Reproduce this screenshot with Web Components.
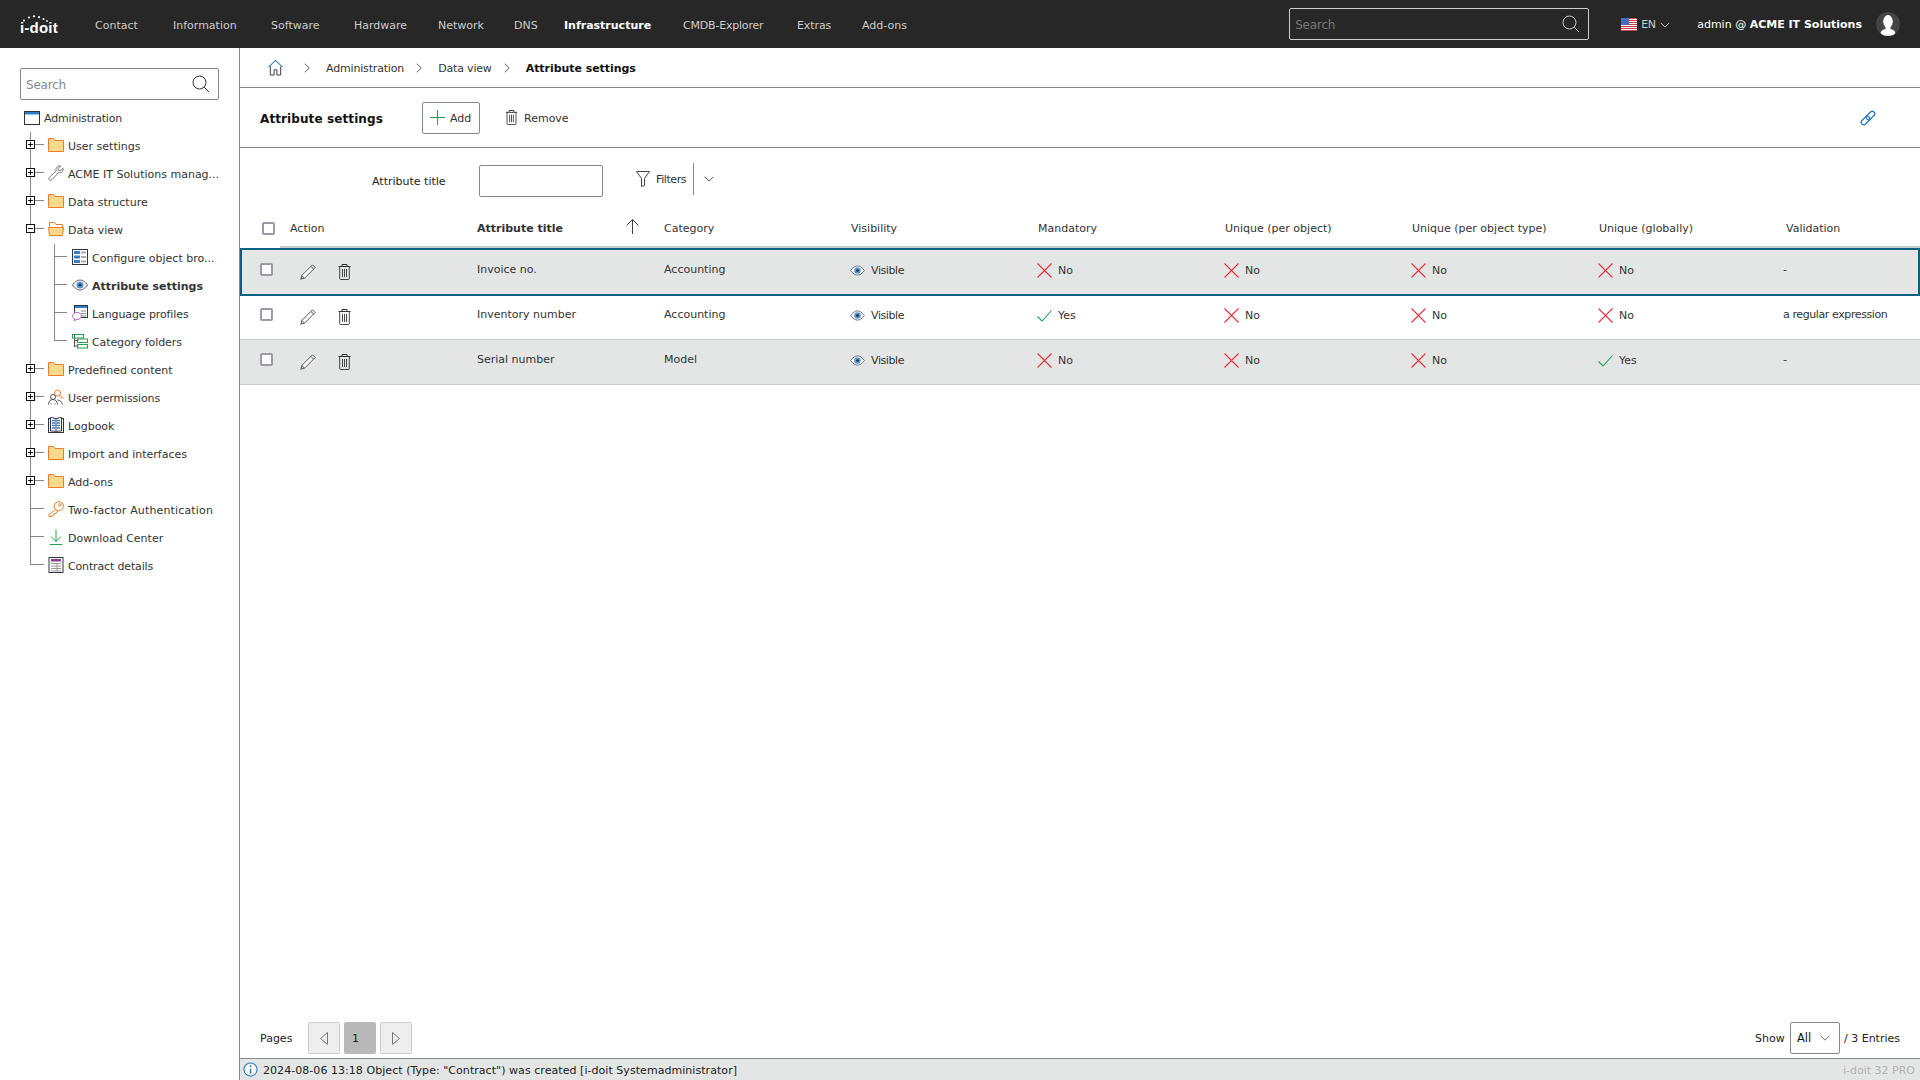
<!DOCTYPE html>
<html><head><meta charset="utf-8"><title>Attribute settings</title>
<style>
html,body{margin:0;padding:0;height:100%}
body{font:11px "DejaVu Sans",sans-serif;color:#333;background:#fff;overflow:hidden}
.ls1{letter-spacing:-.17px}.ls2{letter-spacing:-.4px}
attr-row[selected] cell-text{padding-bottom:4px}
</style></head><body>
<app-shell>
  <top-bar slot="top"></top-bar>
  <side-tree slot="side">
    <tree-row root icon="window" label="Administration" ls="-.17"></tree-row>
    <tree-row exp="plus" icon="folder" label="User settings"></tree-row>
    <tree-row exp="plus" icon="wrench" label="ACME IT Solutions manag..."></tree-row>
    <tree-row exp="plus" icon="folder" label="Data structure"></tree-row>
    <tree-row exp="minus" icon="folderopen" label="Data view"></tree-row>
    <tree-row child icon="browser" label="Configure object bro..."></tree-row>
    <tree-row child active icon="eye" label="Attribute settings"></tree-row>
    <tree-row child icon="lang" label="Language profiles" ls="-.1"></tree-row>
    <tree-row child lastchild icon="catfolder" label="Category folders" ls="-.1"></tree-row>
    <tree-row exp="plus" icon="folder" label="Predefined content"></tree-row>
    <tree-row exp="plus" icon="userkey" label="User permissions" ls="-.15"></tree-row>
    <tree-row exp="plus" icon="book" label="Logbook"></tree-row>
    <tree-row exp="plus" icon="folder" label="Import and interfaces"></tree-row>
    <tree-row exp="plus" icon="folder" label="Add-ons"></tree-row>
    <tree-row icon="key" label="Two-factor Authentication" ls=".15"></tree-row>
    <tree-row icon="download" label="Download Center"></tree-row>
    <tree-row last icon="contract" label="Contract details" ls="-.15"></tree-row>
  </side-tree>
  <bread-crumb slot="main">
    <span class="ls1">Administration</span><span class="ls1">Data view</span><span class="cur">Attribute settings</span>
  </bread-crumb>
  <title-bar slot="main"></title-bar>
  <filter-bar slot="main"></filter-bar>
  <attr-table slot="main">
    <attr-row selected alt><cell-text>Invoice no.</cell-text><cell-text>Accounting</cell-text><cell-flag kind="eye" class="ls2">Visible</cell-flag><cell-flag kind="no">No</cell-flag><cell-flag kind="no">No</cell-flag><cell-flag kind="no">No</cell-flag><cell-flag kind="no">No</cell-flag><cell-text class="v">-</cell-text></attr-row>
    <attr-row><cell-text>Inventory number</cell-text><cell-text>Accounting</cell-text><cell-flag kind="eye" class="ls2">Visible</cell-flag><cell-flag kind="yes">Yes</cell-flag><cell-flag kind="no">No</cell-flag><cell-flag kind="no">No</cell-flag><cell-flag kind="no">No</cell-flag><cell-text class="v ls2">a regular expression</cell-text></attr-row>
    <attr-row alt><cell-text>Serial number</cell-text><cell-text>Model</cell-text><cell-flag kind="eye" class="ls2">Visible</cell-flag><cell-flag kind="no">No</cell-flag><cell-flag kind="no">No</cell-flag><cell-flag kind="no">No</cell-flag><cell-flag kind="yes">Yes</cell-flag><cell-text class="v">-</cell-text></attr-row>
  </attr-table>
  <page-footer slot="main"></page-footer>
  <status-bar slot="main"></status-bar>
</app-shell>
<script>
const ICONS={
 search:'<svg viewBox="0 0 18 18" fill="none" stroke="currentColor"><circle cx="7.5" cy="7.5" r="6.5"/><path d="M12.2 12.2 17 17"/></svg>',
 window:'<svg viewBox="0 0 16 14"><rect x=".5" y=".5" width="15" height="13" fill="#fff" stroke="#333"/><rect x="1" y="1" width="14" height="2.5" fill="#2f80c8"/></svg>',
 folder:'<svg viewBox="0 0 16 14"><path d="M.5 13.5V.5h5l1.500 2h8.500v11z" fill="#fad98d" stroke="#e87e2a"/></svg>',
 folderopen:'<svg viewBox="0 0 16 14"><path d="M1.500 5V.5h5l1.500 2h6.500V5" fill="#fff" stroke="#e87e2a"/><path d="M.5 5.500h15l-1 8h-13z" fill="#fad98d" stroke="#e87e2a"/></svg>',
 wrench:'<svg viewBox="0 0 16 16" fill="#fff" stroke="#777"><path d="M15 3.200 12.300 5.800 10.300 5.400 9.900 3.500 12.600 1C10.400.3 8 1.700 7.900 4.300c0 .7.100 1.200.3 1.600L1.200 12.600c-.9 1-.2 2.800 1.500 2.700.5 0 .9-.3 1.200-.6L10.500 7.700c2.700.8 5.300-1.700 4.500-4.500z"/></svg>',
 browser:'<svg viewBox="0 0 16 16"><rect x=".5" y=".5" width="15" height="15" fill="#fff" stroke="#334"/><g fill="#2f80c8"><rect x="2" y="2" width="6" height="3"/><rect x="2" y="6.500" width="6" height="3"/><rect x="2" y="11" width="6" height="3"/></g><g fill="#aaa"><rect x="9" y="2.500" width="5" height="2"/><rect x="9" y="7" width="5" height="2"/><rect x="9" y="11.500" width="5" height="2"/></g></svg>',
 eye:'<svg viewBox="0 0 16 12"><path d="M.5 6C3 2.500 5.500 1 8 1s5 1.500 7.500 5C13 9.500 10.500 11 8 11S3 9.500.5 6z" fill="#fff" stroke="#667"/><circle cx="8" cy="6" r="3.600" fill="#5a9ad2"/><circle cx="8" cy="6" r="1.500" fill="#234"/></svg>',
 lang:'<svg viewBox="0 0 16 16"><rect x="2.500" y=".5" width="13" height="12" fill="#fff" stroke="#334"/><rect x="3" y="1" width="12" height="2" fill="#2f80c8"/><path d="M9 6h5M9 8.500h5M9 11h5" stroke="#888"/><ellipse cx="5" cy="11" rx="4.300" ry="3.400" fill="#fff" stroke="#b56bc0"/><path d="M2.500 14l-.5 1.800 2.500-1.200" fill="#fff" stroke="#b56bc0"/></svg>',
 catfolder:'<svg viewBox="0 0 16 15" fill="none"><path d="M2.500 1v12M2.500 6.500h4M2.500 12h4" stroke="#555"/><rect x=".5" y=".5" width="11" height="3.500" stroke="#1ea254"/><rect x="5.500" y="5" width="10" height="3.500" stroke="#1ea254"/><rect x="5.500" y="10.500" width="10" height="3.500" stroke="#1ea254"/></svg>',
 userkey:'<svg viewBox="0 0 16 16" fill="none"><circle cx="9.500" cy="4" r="3" stroke="#e87e2a"/><path d="M11.500 6 15.500 10M13.500 8l-1 1.300" stroke="#e87e2a"/><circle cx="5" cy="8" r="2.500" fill="#fff" stroke="#555"/><path d="M.5 15.500c0-3 1.500-5 4.500-5s4 2 4.500 5M9.500 11c2 0 4 1.500 5 4.500M3 14.500v1M7 14.500v1" stroke="#555"/></svg>',
 book:'<svg viewBox="0 0 16 16"><rect x=".5" y="1.500" width="15" height="14" fill="#fff" stroke="#334"/><path d="M2.500 14V.5C5 .5 7 1 8 2.500 9 1 11 .5 13.500.5V14C11 14 9 14 8 15 7 14 5 14 2.500 14z" fill="#fff" stroke="#334"/><path d="M4 3.500h3M4 6h3M4 8.500h3M4 11h3M9 3.500h3M9 6h3M9 8.500h3M9 11h3" stroke="#2f80c8" stroke-width="1.300"/><path d="M8 3v11" stroke="#777" stroke-width="1.500"/></svg>',
 key:'<svg viewBox="0 0 16 16" fill="none" stroke="#e87e2a"><circle cx="10.800" cy="5.200" r="4.600"/><circle cx="12" cy="3.800" r="1.100"/><path d="M7.500 8.500 1 13.500v2h3l.5-1.500h1.500l.5-1.500h1.500l1.500-2.500"/></svg>',
 download:'<svg viewBox="0 0 16 16" fill="none" stroke="#1ea254"><path d="M8 .5v12M3 7.500l5 5 5-5M1.500 15.500h13"/></svg>',
 contract:'<svg viewBox="0 0 15 16"><rect x=".5" y=".5" width="14" height="15" fill="#fff" stroke="#334"/><rect x="2.500" y="2" width="10" height="2.500" fill="#8e3d9e"/><path d="M2.500 6.500h10M2.500 9h10M2.500 11.500h10M2.500 14h10M8.500 6.500V14" stroke="#999"/></svg>',
 home:'<svg viewBox="0 0 16 17" fill="none"><path d="M.5 8 8 1l7.500 7" stroke="#2f7cc0" stroke-width="1.100"/><path d="M2.500 7.500v9h4v-5.500h3v5.500h4v-9" stroke="#333"/></svg>',
 chev:'<svg viewBox="0 0 7 11" fill="none" stroke="#444"><path d="M1 .5 6 5.500l-5 5"/></svg>',
 down:'<svg viewBox="0 0 11 7" fill="none" stroke="currentColor"><path d="M.5 1 5.500 6l5-5"/></svg>',
 plus:'<svg viewBox="0 0 15 15" fill="none" stroke="#1ea254"><path d="M7.500 0v15M0 7.500h15"/></svg>',
 trash:'<svg viewBox="0 0 13 16" fill="none" stroke="#333"><path d="M.5 2.500h12M4 2.500V.5h5v2"/><path d="M1.700 2.500v12q0 1 1 1h7.600q1 0 1-1v-12M4.500 5v8M6.500 5v8M8.500 5v8" stroke-width=".9"/></svg>',
 pencil:'<svg viewBox="0 0 16 16" fill="#fff" stroke="#444" stroke-width=".9"><path d="M12.500.8 15.200 3.500 4.500 14.200 1 15 1.800 11.500z"/><path d="M1 15 .5 15.500M11 2.500l2.500 2.700M1.800 11.500l2.700 2.700"/></svg>',
 link:'<svg viewBox="0 0 16 16" fill="none" stroke="#2f7cc0" stroke-width="1.300"><rect x="8" y="0.500" width="5" height="10" rx="2.500" transform="rotate(45 10.500 5.500)"/><rect x="3" y="5.500" width="5" height="10" rx="2.500" transform="rotate(45 5.500 10.500)"/></svg>',
 filter:'<svg viewBox="0 0 14 16" fill="#fff" stroke="#444"><path d="M.5.5h13L8.500 7.500v7l-3 1V7.500z"/></svg>',
 up:'<svg viewBox="0 0 13 15" fill="none" stroke="#444"><path d="M6.500 15V.5M.5 6.500l6-6 6 6"/></svg>',
 no:'<svg viewBox="0 0 15 15" fill="none" stroke="#e8323c" stroke-width="1.100"><path d="M.5.5l14 14M14.500.5l-14 14"/></svg>',
 yes:'<svg viewBox="0 0 15 15" fill="none" stroke="#1ea254" stroke-width="1.100"><path d="M.5 8.500 5 13 14.500 2.500"/></svg>',
 left:'<svg viewBox="0 0 8 13" fill="#eee" stroke="#777"><path d="M7.500.5v12L.5 6.500z"/></svg>',
 right:'<svg viewBox="0 0 8 13" fill="#eee" stroke="#777"><path d="M.5.5v12l7-6z"/></svg>',
 info:'<svg viewBox="0 0 16 16" fill="none"><circle cx="8" cy="8" r="7" stroke="#2f7cc0" stroke-width="1.200" fill="#fff"/><path d="M8 7v5.500" stroke="#2f7cc0" stroke-width="1.600"/><circle cx="8" cy="4.500" r="1" fill="#2f7cc0"/></svg>',
 flag:'<svg viewBox="0 0 16 13"><rect width="16" height="13" fill="#fff"/><path d="M0 .5h16M0 2.500h16M0 4.500h16M0 6.500h16M0 8.500h16M0 10.500h16M0 12.500h16" stroke="#d0404a"/><rect width="8" height="7" fill="#4a6bb5"/></svg>',
 avatar:'<svg viewBox="0 0 24 24"><defs><clipPath id="c"><circle cx="12" cy="12" r="12"/></clipPath></defs><circle cx="12" cy="12" r="12" fill="#444"/><g clip-path="url(#c)" fill="#fff"><ellipse cx="12" cy="9.500" rx="4.800" ry="6.500"/><path d="M9.500 13h5v4c2.500.5 5 1.800 5 5v2H4.500v-2c0-3.200 2.500-4.500 5-5z"/></g></svg>',
 dots:'<svg viewBox="0 0 26 7" fill="#fff"><circle cx="2" cy="5.500" r="1.100"/><circle cx="7" cy="2.500" r="1.100"/><circle cx="12" cy="1.300" r="1.100"/><circle cx="17" cy="2.200" r="1.100"/><circle cx="21.500" cy="4" r="1.100"/><circle cx="25" cy="6" r=".9"/></svg>'
};
const def=(n,html,extra)=>{customElements.define(n,class extends HTMLElement{
  constructor(){super();this.attachShadow({mode:'open'});this.shadowRoot.innerHTML=typeof html==='function'?'':html;this._h=html;}
  connectedCallback(){if(typeof this._h==='function'&&!this.shadowRoot.innerHTML)this.shadowRoot.innerHTML=this._h(this);if(extra)extra(this)}
})};
class UiIcon extends HTMLElement{
  connectedCallback(){if(this.shadowRoot)return;this.attachShadow({mode:'open'}).innerHTML=`<style>:host{display:inline-flex;flex:none;width:${this.getAttribute('w')||16}px;height:${this.getAttribute('h')||16}px}svg{width:100%;height:100%;display:block;overflow:visible}</style>${ICONS[this.getAttribute('name')]||''}`;}
}
customElements.define('ui-icon',UiIcon);

def('app-shell',`<style>
:host{display:grid;width:1920px;height:1080px;grid-template:48px 1fr/240px 1fr}
.t{grid-column:1/3}.s{border-right:1px solid #888;min-height:0}
.m{display:flex;flex-direction:column;min-width:0;min-height:0}
</style><div class="t"><slot name="top"></slot></div><div class="s"><slot name="side"></slot></div><div class="m"><slot name="main"></slot></div>`);

def('search-box',`<style>
:host{display:flex;align-items:center;box-sizing:border-box;border:1px solid #888;border-radius:2px;padding:0 8px 0 5px;height:32px;color:#333}
:host([dark]){border-color:#ccc;color:#ccc;height:32px}
span{flex:1;color:#888;font-size:12px;padding-top:2px;letter-spacing:-.2px}:host([dark]) span{color:#777}
</style><span>Search</span><ui-icon name="search" w="18" h="18"></ui-icon>`);

def('top-bar',`<style>
:host{display:flex;align-items:center;height:48px;background:#272727;color:#ccc;font-size:11px}
.logo{width:40px;margin:0 35px 0 20px;color:#fff;display:flex;flex-direction:column;align-items:flex-start;line-height:12px;padding-top:1px}
.logo ui-icon{margin-left:2px}
.logo b{font-size:15px;letter-spacing:.2px;font-family:"Liberation Sans",sans-serif}
nav{display:flex;flex:1;padding-top:2px}nav a{white-space:nowrap}
.cur{color:#fff;font-weight:700}
search-box{width:300px;margin-right:32px}
.lang{display:flex;align-items:center;gap:4px;width:76px;padding-top:1px}
.lang span{letter-spacing:-.3px}
.user{color:#fff;white-space:nowrap;margin-right:14px;padding-top:1px}.user b{font-weight:700}
</style>
<div class="logo"><ui-icon name="dots" w="26" h="7"></ui-icon><b>i-doit</b></div>
<nav>
<a style="width:78px">Contact</a><a style="width:98px">Information</a><a style="width:83px">Software</a><a style="width:84px">Hardware</a><a style="width:76px">Network</a><a style="width:50px">DNS</a><a class="cur" style="width:119px">Infrastructure</a><a style="width:114px;letter-spacing:-.2px">CMDB-Explorer</a><a style="width:65px;letter-spacing:-.1px">Extras</a><a>Add-ons</a>
</nav>
<search-box dark></search-box>
<div class="lang"><ui-icon name="flag" w="16" h="13"></ui-icon><span>EN</span><ui-icon name="down" w="10" h="6"></ui-icon></div>
<div class="user">admin @ <b>ACME IT Solutions</b></div>
<ui-icon name="avatar" w="24" h="24" style="margin-right:20px"></ui-icon>`);

def('side-tree',`<style>
:host{display:block;padding:20px 0 0}
search-box{width:199px;margin:0 0 4px 20px;height:32px}
</style><search-box></search-box><slot></slot>`);

def('tree-row',h=>{
 const exp=h.getAttribute('exp'),child=h.hasAttribute('child'),root=h.hasAttribute('root');
 const v='linear-gradient(#888,#888) no-repeat';
 const gOuter=h.hasAttribute('last')
   ?`${v} 10px 0/1px 12px,${v} 10px 12px/14px 1px`
   :child?`${v} 10px 0/1px 100%`
   :`${v} 10px 0/1px 100%,${v} 10px 12px/14px 1px`;
 const gInner=h.hasAttribute('lastchild')
   ?`${v} 10px 0/1px 12px,${v} 10px 12px/13px 1px`
   :`${v} 10px 0/1px 100%,${v} 10px 12px/13px 1px`;
 const box=exp?`<span class="box">${exp==='plus'?'<i class="v"></i>':''}<i class="h"></i></span>`:'';
 const name=h.getAttribute('icon');
 const ls=h.getAttribute('ls');
 return `<style>
 :host{display:flex;align-items:center;height:28px;padding-left:20px;white-space:nowrap;color:#333;font-size:11px}
 .g{width:24px;height:28px;flex:none;display:flex;align-items:flex-start;box-sizing:border-box;padding:8px 0 0 6px}
 .box{width:9px;height:9px;border:1px solid #111;background:#fff;display:grid;place-items:center;grid-template:1fr/1fr;box-sizing:border-box}
 .box i{grid-area:1/1;background:#111;display:block}.box .h{width:5px;height:1px}.box .v{width:1px;height:5px}
 ui-icon{margin:0 4px 2px}
 :host([root]) ui-icon{margin:0 4px}
 :host([root]) .l{padding-top:1px}
 :host([active]) span.l{font-weight:700}
 .l{${ls?`letter-spacing:${ls}px`:''}}
 </style>
 ${root?'':`<span class="g" style="background:${gOuter}">${box}</span>`}
 ${child?`<span class="g" style="background:${gInner}"></span>`:''}
 <ui-icon name="${name}" w="16" h="${({folder:14,folderopen:14,window:14,eye:12,catfolder:15})[name]||16}"></ui-icon><span class="l">${h.getAttribute('label')}</span>`;
});

def('bread-crumb',`<style>
:host{display:flex;align-items:center;height:39px;border-bottom:1px solid #888;box-sizing:content-box;padding-left:28px;font-size:11px;flex:none}
::slotted(span){white-space:nowrap;padding-top:2px}
::slotted(.cur){font-weight:700;color:#111;letter-spacing:-.05px}
</style><ui-icon name="home" w="15" h="17" style="margin-right:21px"></ui-icon>
<ui-icon name="chev" w="6" h="10" style="margin-right:16px"></ui-icon><slot></slot>`,h=>{
 [...h.querySelectorAll('span')].slice(0,-1).forEach(s=>{
   if(s.querySelector('ui-icon'))return;
   s.style.cssText='display:inline-flex;align-items:center';
   const i=document.createElement('ui-icon');i.setAttribute('name','chev');i.setAttribute('w','6');i.setAttribute('h','10');i.style.margin='-2px 16px 0 12px';s.appendChild(i);
 });
});

def('title-bar',`<style>
:host{display:flex;align-items:center;flex:none;height:59px;border-bottom:1px solid #888;padding:0 44px 0 20px;font-size:11px}
h1{font-size:12px;font-weight:700;margin:0;color:#111;width:162px;white-space:nowrap;padding-top:2px;letter-spacing:.1px}
.add{display:flex;align-items:center;gap:5px;height:32px;box-sizing:border-box;border:1px solid #888;border-radius:2px;padding:0 7px;width:58px}
.add span,.rm span{padding-top:2px}
.rm{display:flex;align-items:center;gap:6px;margin-left:25px;flex:1}
</style><h1>Attribute settings</h1><div class="add"><ui-icon name="plus" w="15" h="15"></ui-icon><span>Add</span></div>
<div class="rm"><ui-icon name="trash" w="13" h="15"></ui-icon><span>Remove</span></div><ui-icon name="link" w="16" h="16"></ui-icon>`);

def('filter-bar',`<style>
:host{display:flex;align-items:center;flex:none;height:64px;padding:2px 0 0 132px;box-sizing:border-box;font-size:11px}
label{width:75px;white-space:nowrap;color:#222;padding-top:1px}
.in{width:124px;height:32px;box-sizing:border-box;border:1px solid #888;border-radius:2px;margin:0 33px 0 32px}
.f{display:flex;align-items:center;gap:6px;margin-top:-4px}
.t{width:31px;letter-spacing:-.4px;white-space:nowrap}
.sep{width:1px;height:32px;background:#888;margin:0 4px 0 0}
</style><label>Attribute title</label><div class="in"></div>
<div class="f"><ui-icon name="filter" w="14" h="16"></ui-icon><span class="t">Filters</span><span class="sep"></span><ui-icon name="down" w="10" h="6"></ui-icon></div>`);

const CHECK=`<span class="cb"></span>`;
const CBCSS=`.cb{display:block;width:13px;height:13px;box-sizing:border-box;border:2px solid #9a9aa8;border-radius:2px;background:#fff}`;
const COLS='40px 187px repeat(7,187px) 1fr';

def('attr-table',`<style>
:host{display:block;flex:1;min-height:0}
.hd{display:grid;grid-template-columns:${COLS};height:36px;align-items:center;box-sizing:border-box}
.hd>div{height:36px;box-sizing:border-box;border-bottom:2px solid #c9cccc;padding:0 10px 2px;display:flex;align-items:center;justify-content:space-between;white-space:nowrap;color:#333}
.hd>div:first-child{border-bottom:0;padding:0 0 4px 22px}
.hd b{font-weight:700}
${CBCSS}
</style><div class="hd"><div>${CHECK}</div><div>Action</div><div><b>Attribute title</b><ui-icon name="up" w="13" h="15" style="margin-right:5px;margin-bottom:3px"></ui-icon></div><div>Category</div><div>Visibility</div><div>Mandatory</div><div>Unique (per object)</div><div>Unique (per object type)</div><div>Unique (globally)</div><div>Validation</div></div><slot></slot>`);

def('attr-row',`<style>
:host{display:grid;grid-template-columns:${COLS};height:45px;box-sizing:border-box;border-bottom:1px solid #c9cccc;align-items:center;background:#fff}
:host([alt]){background:#e4e6e6}
:host([selected]){outline:2px solid #0c6080;outline-offset:-2px;height:48px;margin-bottom:-1px;padding-bottom:1px;position:relative;z-index:1;border-bottom:0}
.c{padding-left:20px;display:flex;align-items:center;padding-bottom:5px}
${CBCSS}
.a{display:flex;align-items:center;gap:22px;padding-left:20px}
</style><div class="c">${CHECK}</div><div class="a"><ui-icon name="pencil"></ui-icon><ui-icon name="trash" w="13" h="16"></ui-icon></div><slot></slot>`);

def('cell-text',`<style>:host{display:block;padding:0 0 6px 10px;white-space:nowrap;color:#333}:host(.v){margin-left:-3px}</style><slot></slot>`);
def('cell-flag',h=>`<style>:host{display:flex;align-items:center;gap:6px;padding:0 0 3px 9px;white-space:nowrap;color:#333}</style><ui-icon name="${h.getAttribute('kind')}" w="15" h="${h.getAttribute('kind')==='eye'?11:15}"></ui-icon><slot></slot>`);

def('page-footer',`<style>
:host{display:flex;align-items:center;flex:none;height:32px;padding:0 20px 4px;color:#222;font-size:11px}
.p{width:32px;height:32px;box-sizing:border-box;border:1px solid #ccc;border-radius:2px;background:#eee;display:flex;align-items:center;justify-content:center;margin-right:4px}
.on{background:#b8b8b8;border-color:#b8b8b8;padding-right:9px}
.g{flex:1}
.show{letter-spacing:.1px;margin-right:1px}
.sel{width:50px;height:32px;box-sizing:border-box;border:1px solid #888;border-radius:2px;display:flex;align-items:center;gap:9px;padding-left:6px;margin:0 4px;color:#111;font-size:11.5px}
</style><span style="width:48px">Pages</span><div class="p"><ui-icon name="left" w="8" h="13"></ui-icon></div><div class="p on">1</div><div class="p"><ui-icon name="right" w="8" h="13"></ui-icon></div><div class="g"></div>
<span class="show">Show</span><div class="sel">All<ui-icon name="down" w="10" h="6" style="color:#555"></ui-icon></div><span>/ 3 Entries</span>`);

def('status-bar',`<style>
:host{display:flex;align-items:center;flex:none;height:22px;box-sizing:border-box;border-top:1px solid #888;background:#e4e6e6;padding:0 5px 0 3px;color:#222;font-size:11px;white-space:nowrap}
.m{flex:1;margin-left:5px;padding-top:2px;letter-spacing:.05px}.v{color:#b2b2b2;padding-top:2px}
</style><ui-icon name="info" w="15" h="15"></ui-icon><span class="m">2024-08-06 13:18 Object (Type: "Contract") was created [i-doit Systemadministrator]</span><span class="v">i-doit 32 PRO</span>`);
</script>
</body></html>
